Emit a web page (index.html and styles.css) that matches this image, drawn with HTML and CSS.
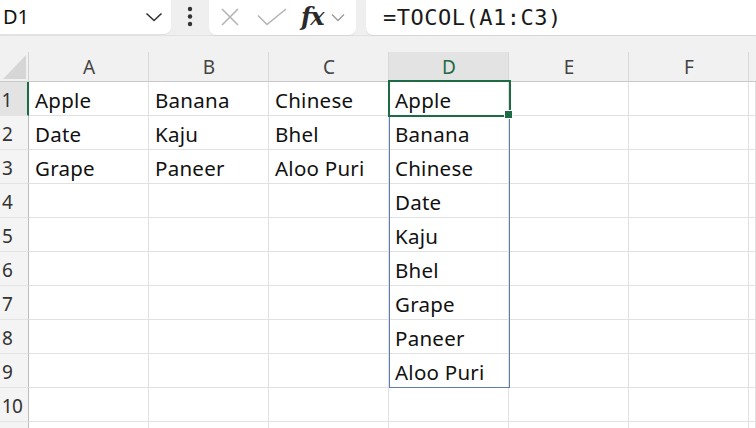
FILE: index.html
```html
<!DOCTYPE html>
<html>
<head>
<meta charset="utf-8">
<link rel="stylesheet" href="styles.css">
</head>
<body>
<div class="topbar">
  <div class="namebox">
    <span class="nb-text">D1</span>
    <svg class="nb-chev" width="18" height="10" viewBox="0 0 18 10"><path d="M1.5 1.5 L9 8.5 L16.5 1.5" fill="none" stroke="#333" stroke-width="1.6"/></svg>
  </div>
  <div class="dots">
    <svg width="8" height="22" viewBox="0 0 8 22"><circle cx="4" cy="3" r="2.2" fill="#333"/><circle cx="4" cy="10.5" r="2.2" fill="#333"/><circle cx="4" cy="18" r="2.2" fill="#333"/></svg>
  </div>
  <div class="fxbox">
    <svg class="ic-x" width="20" height="18" viewBox="0 0 20 18"><path d="M2 1 L18 17 M18 1 L2 17" fill="none" stroke="#b4b4b4" stroke-width="1.6"/></svg>
    <svg class="ic-check" width="30" height="18" viewBox="0 0 30 18"><path d="M1 7.5 L10 16.5 L29 1" fill="none" stroke="#b4b4b4" stroke-width="1.6"/></svg>
    <span class="fx">fx</span>
    <svg class="ic-chev" width="14" height="9" viewBox="0 0 14 9"><path d="M1 1.5 L7 7.5 L13 1.5" fill="none" stroke="#9a9a9a" stroke-width="1.3"/></svg>
  </div>
  <div class="formula">=TOCOL(A1:C3)</div>
</div>
<div class="band"></div>
<div class="sheet">
  <div class="corner"><div class="tri"></div></div>
  <div class="ch">A</div><div class="ch">B</div><div class="ch">C</div><div class="ch ch-sel">D</div><div class="ch">E</div><div class="ch">F</div><div class="ch ch-last"></div>

  <div class="rh rh-sel">1</div><div class="c">Apple</div><div class="c">Banana</div><div class="c">Chinese</div><div class="c">Apple</div><div class="c"></div><div class="c"></div><div class="c"></div>
  <div class="rh">2</div><div class="c">Date</div><div class="c">Kaju</div><div class="c">Bhel</div><div class="c">Banana</div><div class="c"></div><div class="c"></div><div class="c"></div>
  <div class="rh">3</div><div class="c">Grape</div><div class="c">Paneer</div><div class="c">Aloo Puri</div><div class="c">Chinese</div><div class="c"></div><div class="c"></div><div class="c"></div>
  <div class="rh">4</div><div class="c"></div><div class="c"></div><div class="c"></div><div class="c">Date</div><div class="c"></div><div class="c"></div><div class="c"></div>
  <div class="rh">5</div><div class="c"></div><div class="c"></div><div class="c"></div><div class="c">Kaju</div><div class="c"></div><div class="c"></div><div class="c"></div>
  <div class="rh">6</div><div class="c"></div><div class="c"></div><div class="c"></div><div class="c">Bhel</div><div class="c"></div><div class="c"></div><div class="c"></div>
  <div class="rh">7</div><div class="c"></div><div class="c"></div><div class="c"></div><div class="c">Grape</div><div class="c"></div><div class="c"></div><div class="c"></div>
  <div class="rh">8</div><div class="c"></div><div class="c"></div><div class="c"></div><div class="c">Paneer</div><div class="c"></div><div class="c"></div><div class="c"></div>
  <div class="rh">9</div><div class="c"></div><div class="c"></div><div class="c"></div><div class="c">Aloo Puri</div><div class="c"></div><div class="c"></div><div class="c"></div>
  <div class="rh rh-10">10</div><div class="c"></div><div class="c"></div><div class="c"></div><div class="c"></div><div class="c"></div><div class="c"></div><div class="c"></div>
  <div class="rh"></div><div class="c"></div><div class="c"></div><div class="c"></div><div class="c"></div><div class="c"></div><div class="c"></div><div class="c"></div>

  <div class="spill"></div>
  <div class="active"></div>
  <div class="handle"></div>
</div>
</body>
</html>
```
FILE: styles.css
```css
html, body {
  margin: 0;
  padding: 0;
  background: #ffffff;
  overflow: hidden;
  width: 756px;
  height: 428px;
}
body {
  font-family: "Noto Sans", "Open Sans", sans-serif;
  color: #111;
}
.topbar {
  height: 36px;
  background: #efefef;
  display: flex;
  align-items: flex-start;
  border-bottom: 1px solid #e2e2e2;
  box-sizing: border-box;
}
.namebox {
  width: 171px;
  height: 34px;
  background: #fff;
  border-radius: 0 0 7px 0;
  display: flex;
  align-items: center;
  box-sizing: border-box;
  padding: 0 8px 2px 3px;
  box-shadow: 0 1px 1px rgba(0,0,0,0.06);
}
.nb-text {
  font-size: 20px;
  color: #111;
  flex: 1;
}
.nb-chev {
  margin-top: 2px;
}
.dots {
  width: 38px;
  height: 34px;
  display: flex;
  justify-content: center;
  padding-top: 6px;
  box-sizing: border-box;
}
.fxbox {
  width: 147px;
  height: 35px;
  background: #fff;
  border-radius: 0 0 7px 7px;
  display: flex;
  align-items: center;
  box-sizing: border-box;
  padding: 0 0 2px 11px;
  box-shadow: 0 1px 1px rgba(0,0,0,0.06);
}
.ic-x { margin-right: 17px; }
.ic-check { margin-right: 14px; }
.fx {
  font-family: "DejaVu Serif", "Liberation Serif", serif;
  font-style: italic;
  font-weight: bold;
  font-size: 24px;
  line-height: 33px;
  height: 33px;
  color: #2a2a2a;
  margin-right: 7px;
  letter-spacing: -1px;
}
.ic-chev { margin-top: 1px; }
.formula {
  margin-left: 10px;
  flex: 1;
  height: 35px;
  background: #fff;
  border-radius: 0 0 0 8px;
  box-sizing: border-box;
  padding: 2px 0 0 17px;
  font-family: "DejaVu Sans Mono", "Liberation Mono", monospace;
  font-size: 22px;
  letter-spacing: 0.5px;
  line-height: 31px;
  color: #1a1a1a;
  box-shadow: 0 1px 1px rgba(0,0,0,0.06);
}
.band {
  height: 16px;
  background: #f1f1f1;
}
.sheet {
  position: relative;
  display: grid;
  grid-template-columns: 29px repeat(6, 120px) 7px;
  grid-template-rows: 30px;
  grid-auto-rows: 34px;
  height: 376px;
  overflow: hidden;
}
.corner {
  background: #f1f1f1;
  border-right: 1px solid #d2d2d2;
  border-bottom: 1px solid #c8c8c8;
  box-sizing: border-box;
  position: relative;
}
.tri {
  position: absolute;
  left: 3px;
  top: 3px;
  width: 23px;
  height: 24px;
  background: #d6d6d6;
  clip-path: polygon(100% 0, 100% 100%, 0 100%);
}
.ch {
  background: #f1f1f1;
  border-right: 1px solid #d8d8d8;
  border-bottom: 1px solid #c8c8c8;
  box-sizing: border-box;
  display: flex;
  align-items: center;
  justify-content: center;
  font-size: 19px;
  color: #444;
  padding: 1px 0 0 1px;
}
.ch-sel {
  background: #e3e3e3;
  color: #1d6b45;
  border-bottom: 2px solid #1d6b45;
}
.ch-last { border-right: none; }
.rh {
  background: #f4f4f4;
  border-right: 1px solid #bdbdbd;
  border-bottom: 1px solid #e4e4e4;
  box-sizing: border-box;
  display: flex;
  align-items: center;
  justify-content: center;
  padding: 2px 13px 0 0;
  font-size: 19px;
  color: #333;
}
.rh-sel {
  background: #e3e3e3;
  border-right: 2px solid #1d6b45;
}
.rh-10 {
  padding-right: 4px;
  letter-spacing: -0.5px;
}
.c {
  border-right: 1px solid #e1e1e1;
  border-bottom: 1px solid #e1e1e1;
  box-sizing: border-box;
  display: flex;
  align-items: center;
  padding: 2px 0 0 6px;
  font-size: 20.5px;
  letter-spacing: 0.25px;
  color: #111;
  white-space: nowrap;
}
.spill {
  position: absolute;
  left: 389px;
  top: 29px;
  width: 121px;
  height: 307px;
  border: 1px solid #5f7cb3;
  box-sizing: border-box;
}
.active {
  position: absolute;
  left: 388px;
  top: 28px;
  width: 123px;
  height: 37px;
  border: 2px solid #1d6b45;
  box-sizing: border-box;
}
.handle {
  position: absolute;
  left: 505px;
  top: 59px;
  width: 7px;
  height: 7px;
  background: #1d6b45;
  outline: 1px solid #fff;
}
```
